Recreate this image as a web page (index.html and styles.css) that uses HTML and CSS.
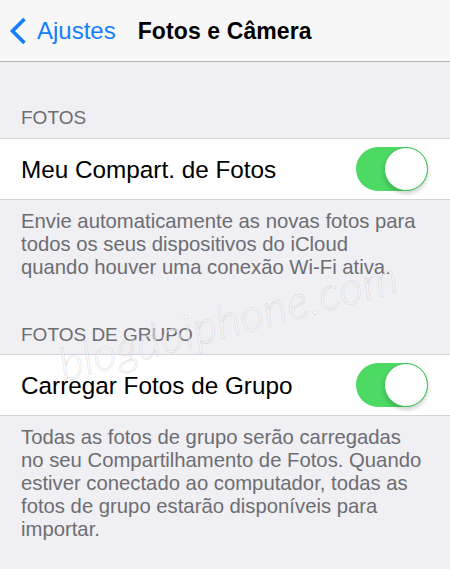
FILE: index.html
```html
<!DOCTYPE html>
<html lang="pt">
<head>
<meta charset="utf-8">
<link rel="stylesheet" href="styles.css">
</head>
<body>
<div class="screen">
  <header class="nav">
    <a class="back">
      <svg class="chev" width="20" height="28" viewBox="0 0 20 28"><path d="M16.5 2 L4.5 14 L16.5 26" fill="none" stroke="#157efb" stroke-width="3.6" stroke-linecap="butt" stroke-linejoin="miter"/></svg>
      <span>Ajustes</span>
    </a>
    <h1 class="title">Fotos e Câmera</h1>
  </header>

  <section class="group g1">
    <div class="gh">FOTOS</div>
    <div class="row">
      <span class="label">Meu Compart. de Fotos</span>
      <span class="toggle"><span class="knob"></span></span>
    </div>
    <p class="gf">Envie automaticamente as novas fotos para<br>todos os seus dispositivos do iCloud<br>quando houver uma conexão Wi-Fi ativa.</p>
  </section>

  <section class="group g2">
    <div class="gh">FOTOS DE GRUPO</div>
    <div class="row">
      <span class="label">Carregar Fotos de Grupo</span>
      <span class="toggle"><span class="knob"></span></span>
    </div>
    <p class="gf">Todas as fotos de grupo serão carregadas<br>no seu Compartilhamento de Fotos. Quando<br>estiver conectado ao computador, todas as<br>fotos de grupo estarão disponíveis para<br>importar.</p>
  </section>

  <div class="watermark">blogdoiphone.com</div>
</div>
</body>
</html>
```

FILE: styles.css
```css
* { box-sizing: border-box; margin: 0; padding: 0; }
html, body { width: 450px; height: 569px; overflow: hidden; }
body {
  background: #efeff4;
  font-family: "Liberation Sans", Arial, sans-serif;
  color: #000;
}
.screen { position: relative; width: 450px; height: 569px; }

.nav {
  height: 62px;
  background: #f7f7f8;
  border-bottom: 1px solid #b4b4b6;
  display: flex;
  align-items: center;
  padding-top: 1px;
}
.back {
  display: flex;
  align-items: center;
  color: #157efb;
  font-size: 24px;
  padding-left: 8px;
}
.chev { margin-right: 9px; }
.title {
  font-size: 23px;
  font-weight: bold;
  margin-left: 22px;
  letter-spacing: 0.1px;
}

.group { display: flex; flex-direction: column; }
.gh {
  color: #6d6d72;
  font-size: 19px;
  padding-left: 21px;
  line-height: 20px;
}
.g1 .gh { padding-top: 46px; height: 76px; }
.g2 .gh { padding-top: 25px; height: 54px; }

.row {
  height: 62px;
  background: #fff;
  border-top: 1px solid #d4d4d8;
  border-bottom: 1px solid #d4d4d8;
  display: flex;
  align-items: center;
  justify-content: space-between;
  padding: 0 22px 0 21px;
}
.label { font-size: 24.3px; padding-top: 1px; }

.toggle {
  position: relative;
  width: 72px;
  height: 44px;
  border-radius: 22px;
  background: #4cd964;
}
.knob {
  position: absolute;
  right: 0;
  top: 0;
  width: 44px;
  height: 44px;
  border-radius: 50%;
  background: #fff;
  border: 1.5px solid #3fc658;
  box-shadow: 0 3px 4px rgba(0,0,0,0.18);
}

.gf {
  color: #6d6d72;
  font-size: 20.3px;
  line-height: 23px;
  padding: 10px 10px 0 21px;
  white-space: nowrap;
}
.g1 .gf { height: 100px; }

.watermark {
  position: absolute;
  left: 52px;
  top: 338px;
  font-family: "Lato", "Liberation Sans", sans-serif;
  font-weight: 300;
  font-style: italic;
  font-size: 46px;
  letter-spacing: 0.5px;
  color: rgba(255,255,255,0.55);
  -webkit-text-stroke: 0.6px rgba(150,150,160,0.35);
  transform: rotate(-15deg);
  transform-origin: left top;
  white-space: nowrap;
  pointer-events: none;
}
```
